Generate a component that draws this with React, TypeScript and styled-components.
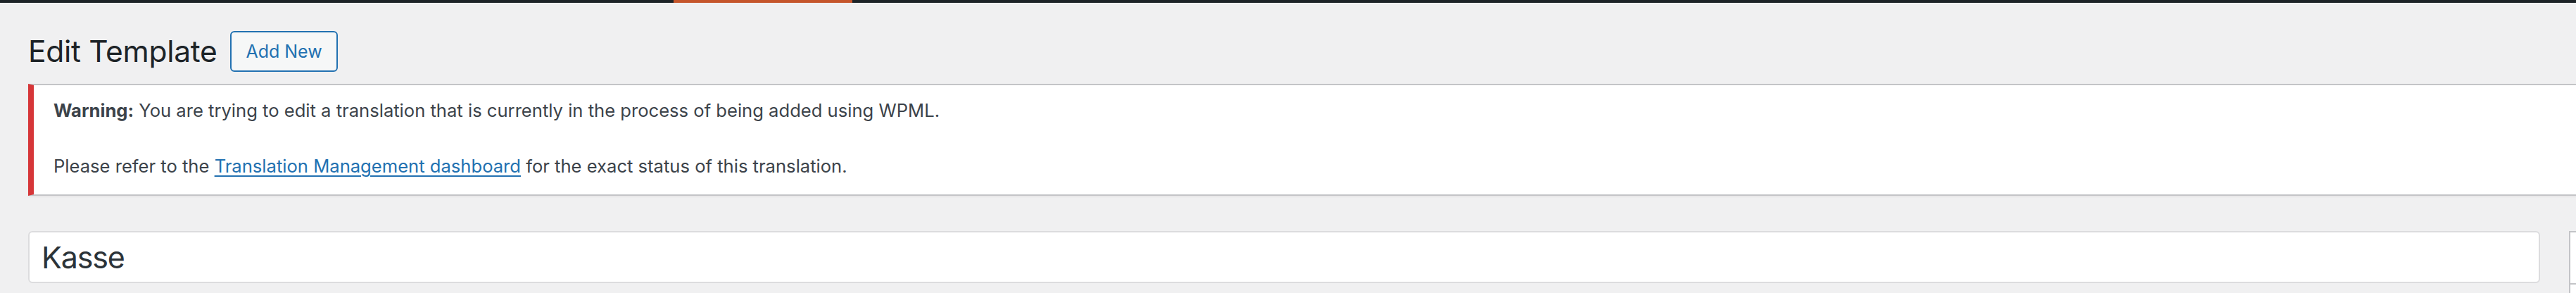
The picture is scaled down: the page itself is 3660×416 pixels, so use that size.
import React from 'react';
import styled, { createGlobalStyle } from 'styled-components';

const GlobalStyle = createGlobalStyle`
  html, body {
    margin: 0;
    padding: 0;
    background: #f0f0f1;
    overflow: hidden;
    height: 416px;
  }
  body {
    font-family: Inter, "Noto Sans", "Liberation Sans", sans-serif;
    color: #3c434a;
  }
`;

const AdminBar = styled.div`
  height: 4px;
  background: #1d2327;
  display: flex;
`;

const ActiveTab = styled.div`
  margin-left: 957px;
  width: 254px;
  background: #c5552b;
`;

const Wrap = styled.div`
  padding-left: 40px;
  margin-right: -40px;
`;

const HeaderRow = styled.div`
  display: flex;
  align-items: center;
  margin-top: 39px;
`;

const Title = styled.h1`
  margin: 0;
  font-size: 42.5px;
  font-weight: 400;
  line-height: 60px;
  color: #1d2327;
  letter-spacing: -0.3px;
`;

const AddNew = styled.a`
  display: inline-flex;
  align-items: center;
  box-sizing: border-box;
  height: 58px;
  margin-left: 19px;
  padding: 0 20px;
  border: 2px solid #2271b1;
  border-radius: 6px;
  background: #f6f7f7;
  color: #2271b1;
  font-size: 25px;
  text-decoration: none;
`;

const Notice = styled.div`
  margin-top: 16px;
  background: #fff;
  border: 2px solid #c3c4c7;
  border-left: 8px solid #d63638;
  box-shadow: 0 2px 2px rgba(0, 0, 0, 0.04);
  padding: 16px 28px 20px;
`;

const NoticeText = styled.p`
  margin: 0;
  font-size: 25.6px;
  line-height: 39.5px;
  color: #3c434a;
`;

const NoticeLink = styled.a`
  color: #2271b1;
  text-decoration: underline;
  text-underline-offset: 4px;
`;

const TitleRow = styled.div`
  display: flex;
  margin-top: 50px;
  margin-right: -514px;
  align-items: flex-start;
`;

const TitleInput = styled.input`
  flex: 1;
  min-width: 0;
  box-sizing: border-box;
  height: 74px;
  padding: 0 17px;
  border: 2px solid #dcdcde;
  border-radius: 6px;
  background: #fff;
  font-family: inherit;
  font-size: 43px;
  letter-spacing: -1.2px;
  color: #2c3338;
  outline: none;
`;

const SideBox = styled.div`
  margin-left: 41px;
  width: 560px;
  flex-shrink: 0;
  height: 160px;
  background: #fff;
  border: 2px solid #c3c4c7;
`;

const SideHeader = styled.div`
  height: 72px;
  border-bottom: 2px solid #c3c4c7;
`;

export default function App() {
  return (
    <>
      <GlobalStyle />
      <AdminBar>
        <ActiveTab />
      </AdminBar>
      <Wrap>
        <HeaderRow>
          <Title>Edit Template</Title>
          <AddNew href="#">Add New</AddNew>
        </HeaderRow>
        <Notice>
          <NoticeText>
            <strong>Warning:</strong> You are trying to edit a translation that is currently in the process of being added using WPML.
            <br />
            <br />
            Please refer to the <NoticeLink href="#">Translation Management dashboard</NoticeLink> for the exact status of this translation.
          </NoticeText>
        </Notice>
        <TitleRow>
          <TitleInput defaultValue="Kasse" />
          <SideBox>
            <SideHeader />
          </SideBox>
        </TitleRow>
      </Wrap>
    </>
  );
}
